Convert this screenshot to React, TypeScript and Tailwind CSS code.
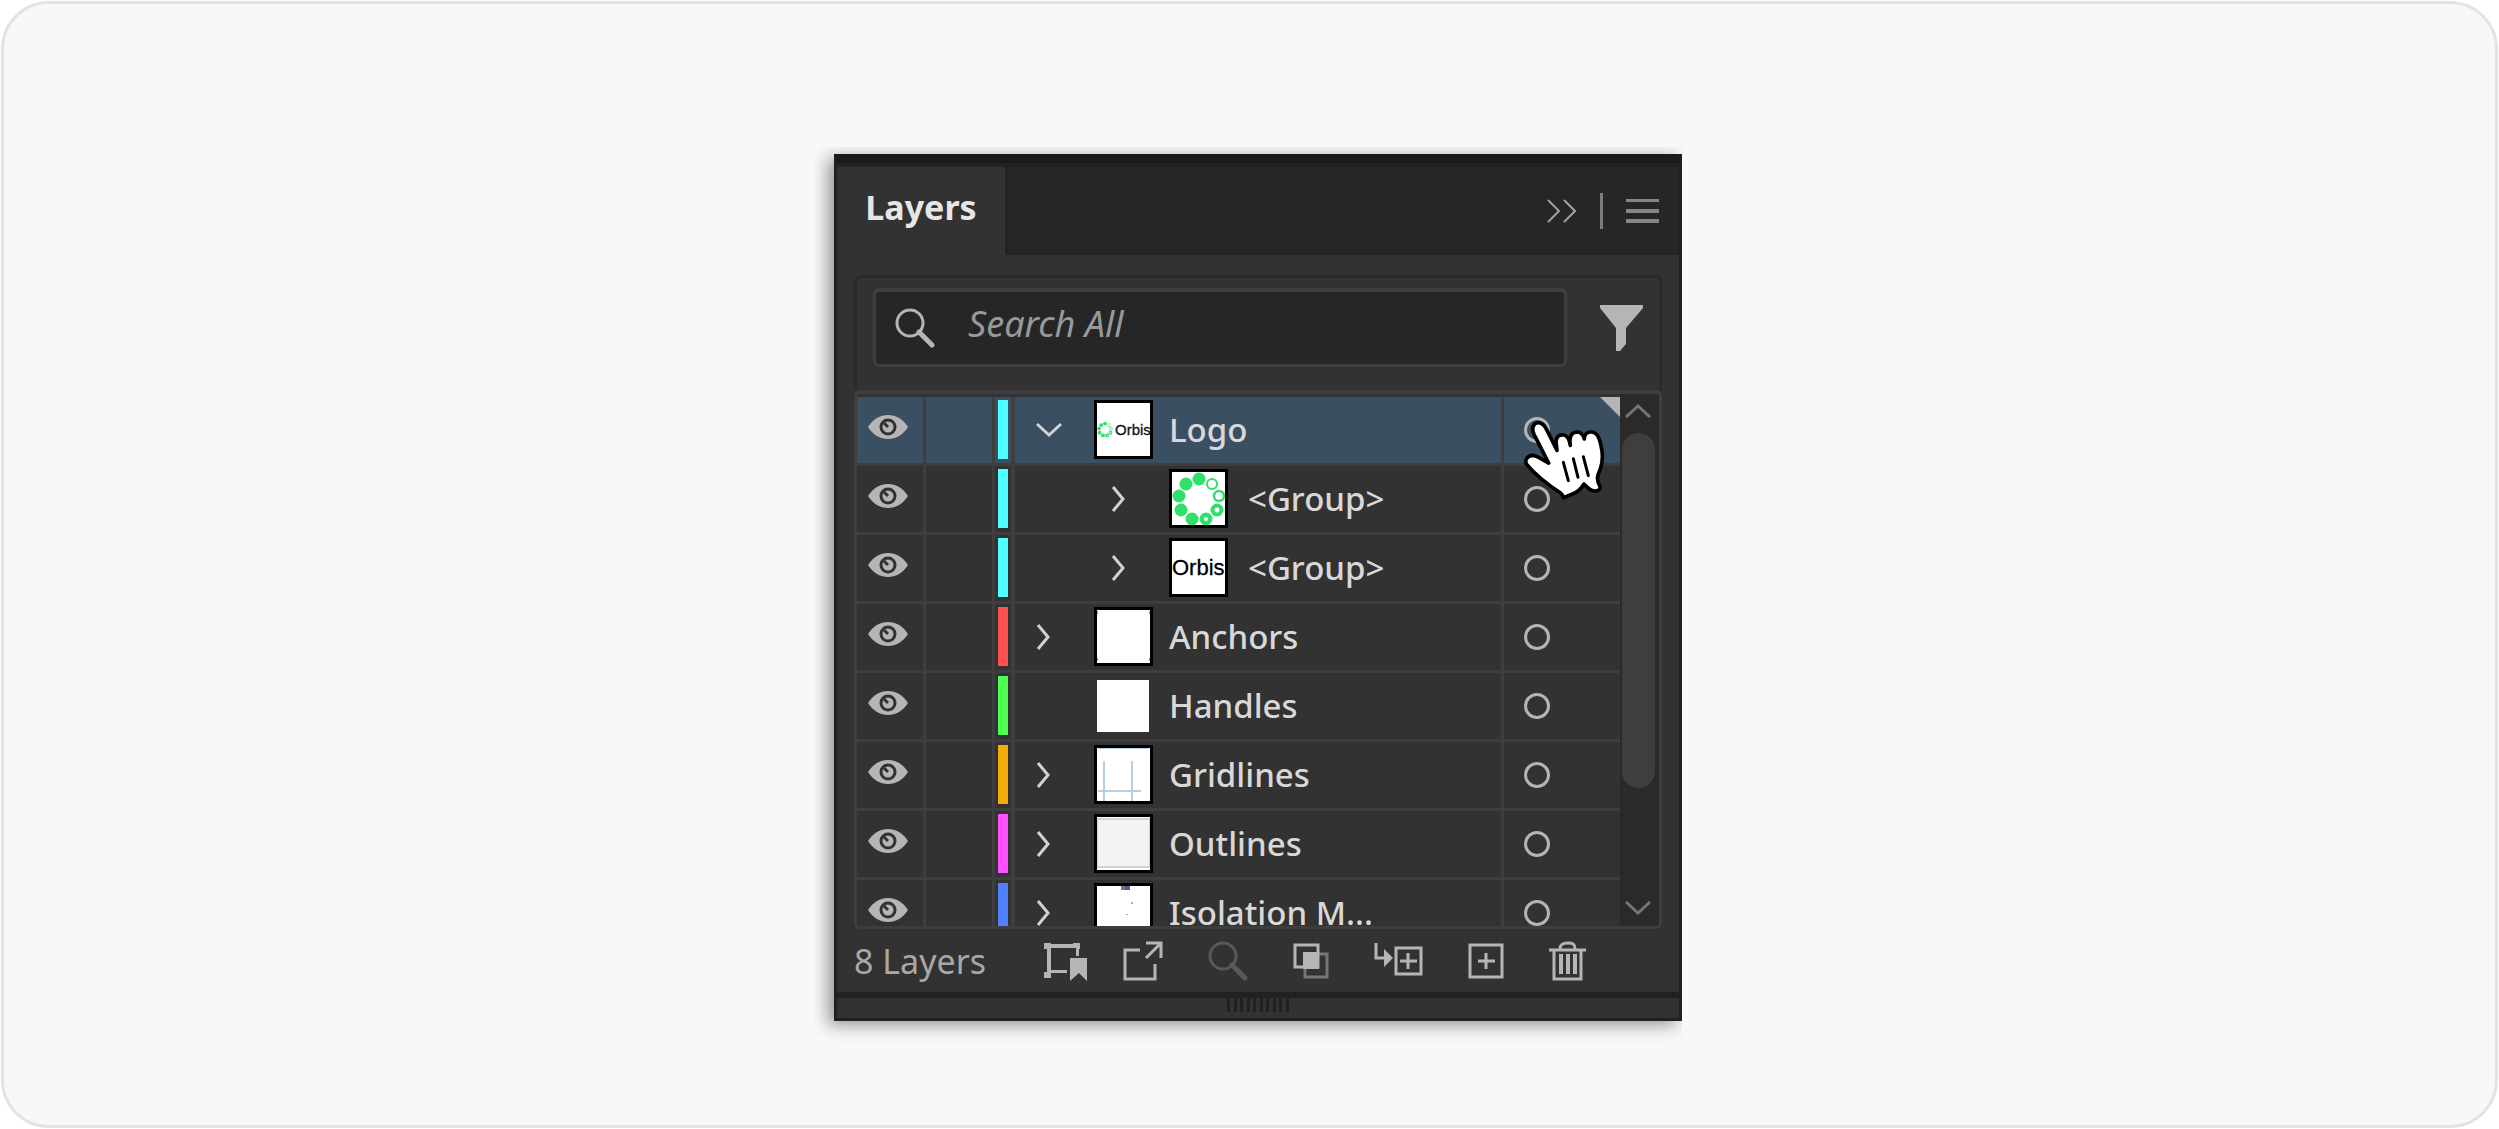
import { useState } from 'react'

type Layer = {
  id: string
  name: string
  color: string
  thumb: string
  child?: boolean
  arrow?: 'open' | 'closed'
}

const layers: Layer[] = [
  { id: 'logo', name: 'Logo', color: 'bg-[#4fffff]', thumb: 'logo', arrow: 'open' },
  { id: 'group-mark', name: '<Group>', color: 'bg-[#4fffff]', thumb: 'mark', child: true, arrow: 'closed' },
  { id: 'group-word', name: '<Group>', color: 'bg-[#4fffff]', thumb: 'word', child: true, arrow: 'closed' },
  { id: 'anchors', name: 'Anchors', color: 'bg-[#ff4f4f]', thumb: 'anchors', arrow: 'closed' },
  { id: 'handles', name: 'Handles', color: 'bg-[#4fff4f]', thumb: 'handles' },
  { id: 'gridlines', name: 'Gridlines', color: 'bg-[#f3ae05]', thumb: 'gridlines', arrow: 'closed' },
  { id: 'outlines', name: 'Outlines', color: 'bg-[#ff4fff]', thumb: 'outlines', arrow: 'closed' },
  { id: 'isolation', name: 'Isolation M...', color: 'bg-[#4f80ff]', thumb: 'isolation', arrow: 'closed' },
]

function EyeIcon() {
  return (
    <svg width="40" height="24" viewBox="0 0 40 24">
      <path d="M0 12C5 4 12 0 20 0s15 4 20 12c-5 8-12 12-20 12S5 20 0 12z" fill="#b5b5b5" />
      <circle cx="20" cy="12" r="7" fill="none" stroke="#323232" strokeWidth="3" />
      <path d="M20 12l-4-4" stroke="#323232" strokeWidth="3" />
    </svg>
  )
}

function Chevron({ open }: { open: boolean }) {
  return open ? (
    <svg width="26" height="15" viewBox="0 0 26 15" fill="none" stroke="#d2d2d2" strokeWidth="3">
      <path d="M1 2l12 11L25 2" />
    </svg>
  ) : (
    <svg width="14" height="26" viewBox="0 0 14 26" fill="none" stroke="#d2d2d2" strokeWidth="3">
      <path d="M2 1l10 12L2 25" />
    </svg>
  )
}

function RingMark() {
  return (
    <g fill="#2fe06a">
      <circle cx="27" cy="7" r="6.5" />
      <circle cx="14" cy="12" r="6.5" />
      <circle cx="7" cy="24" r="6.5" />
      <circle cx="9" cy="38" r="6.5" />
      <circle cx="20" cy="47" r="6.5" />
      <circle cx="34" cy="47" r="6.5" />
      <circle cx="45" cy="38" r="6.5" />
      <circle cx="47" cy="24" r="5" fill="none" stroke="#2fe06a" strokeWidth="2.5" />
      <circle cx="40" cy="12" r="5" fill="none" stroke="#2fe06a" strokeWidth="2" />
      <circle cx="34" cy="47" r="2" fill="#fff" />
      <circle cx="45" cy="38" r="2.5" fill="#fff" />
    </g>
  )
}

function Thumb({ kind }: { kind: string }) {
  return (
    <svg
      width="59"
      height="59"
      viewBox="-3 -3 59 59"
      className="shrink-0"
      fontFamily="'Liberation Sans', Arial, sans-serif"
    >
      {kind !== 'handles' && <rect x="-3" y="-3" width="59" height="59" fill="#000" />}
      <svg width="53" height="53" viewBox="0 0 53 53">
        <rect y={kind === 'handles' ? 1 : 0} width="52" height="52" fill="#fff" />
        {kind !== 'handles' && <rect width="53" height="53" fill="#fff" />}
        {kind === 'logo' && (
          <>
            <svg y="18" width="16" height="17" viewBox="0 0 54 54">
              <RingMark />
            </svg>
            <text x="18" y="32" fontSize="15" fill="#111" stroke="#111" strokeWidth="0.3">Orbis</text>
          </>
        )}
        {kind === 'mark' && <RingMark />}
        {kind === 'word' && (
          <text x="0" y="34" fontSize="22" fill="#000" stroke="#000" strokeWidth="0.3">Orbis</text>
        )}
        {kind === 'anchors' && (
          <path d="M0 1h1v3H0zM52 1h1v3h-1zM0 48h1v3H0zM52 48h1v3h-1z" fill="#999" />
        )}
        {kind === 'gridlines' && (
          <path d="M1 0h50M7 13v40M35 13v40M1 43h43" stroke="#b9cde4" strokeWidth="2" />
        )}
        {kind === 'outlines' && (
          <rect x="0" y="2" width="53" height="48" fill="#f3f3f3" stroke="#d2d2d2" strokeWidth="2" />
        )}
        {kind === 'isolation' && (
          <>
            <path d="M24 0h4v4h-4z" fill="#777" />
            <path d="M28 0h5v4h-5z" fill="#46648c" />
            <path d="M34 16h2v2h-2zM29 28h2v1h-2z" fill="#aaa" />
          </>
        )}
      </svg>
    </svg>
  )
}

function SearchIcon({ color }: { color: string }) {
  return (
    <svg width="40" height="40" viewBox="0 0 40 40" fill="none" stroke={color} className="shrink-0">
      <circle cx="15" cy="15" r="13" strokeWidth="3" />
      <path d="M24 24l13 13" strokeWidth="5" strokeLinecap="round" />
    </svg>
  )
}

function PointerHand() {
  return (
    <svg
      className="pointer-events-none absolute left-[18px] top-[22px] z-10"
      width="84"
      height="82"
      viewBox="726 118 252 246"
      stroke="#000"
      strokeLinecap="round"
      strokeLinejoin="round"
    >
      <path
        d="M806 250L762 164C752 142 764 128 776 129C788 130 795 139 800 150L831 212L828 186C829 168 842 164 852 166C862 168 868 180 871 197C867 172 874 158 890 157C903 157 910 165 913 178C912 162 924 156 936 157C956 160 961 185 966 214C969 240 966 256 960 270C953 286 947 298 960 320C962 328 955 335 943 334C928 332 921 321 912 313C902 330 892 338 876 344L850 354C848 348 848 344 842 340C808 318 770 290 740 254C733 243 741 228 757 227C772 227 786 240 806 250Z"
        fill="#fff"
        strokeWidth="11"
      />
      <path d="M850 248L865 303M880 237L894 293M910 231L925 288" fill="none" strokeWidth="9" />
    </svg>
  )
}

function LayerRow({
  layer,
  selected,
  onSelect,
}: {
  layer: Layer
  selected: boolean
  onSelect: () => void
}) {
  return (
    <li
      className={`relative flex h-[69px] shrink-0 border-b-[3px] border-[#3e3e3e] ${
        selected ? 'bg-[#3b4f63]' : 'bg-[#323232]'
      }`}
    >
      <button
        type="button"
        aria-label={`Toggle visibility of ${layer.name}`}
        className="flex w-[69px] items-center justify-center border-r-[3px] border-[#3e3e3e] pb-[6px] pr-1"
      >
        <EyeIcon />
      </button>
      <button
        type="button"
        aria-label={`Toggle lock of ${layer.name}`}
        className="w-[69px] border-r-[3px] border-[#3e3e3e]"
      />
      <div className="w-5 border-r-4 border-[#3e3e3e] px-[3px] py-[3px]">
        <div className={`h-[59px] w-[10px] ${layer.color}`} />
      </div>

      <div
        className={`flex min-w-0 flex-1 items-start border-r-[3px] border-[#3e3e3e] pt-[3px] ${
          layer.child ? 'gap-5 pl-[75px]' : 'gap-4'
        }`}
      >
        <div className="flex shrink-0">
          <div className="h-[59px] w-[79px]">
            {layer.arrow && (
              <button
                type="button"
                aria-label={`Expand ${layer.name}`}
                className="flex h-full w-full items-center pl-[21px]"
              >
                <Chevron open={layer.arrow === 'open'} />
              </button>
            )}
          </div>
          <Thumb kind={layer.thumb} />
        </div>
        <span className="truncate text-[33px] font-medium leading-[60px] text-[#d8d8d8]">
          {layer.name}
        </span>
      </div>

      <div className="relative w-[116px]">
        <button
          type="button"
          aria-label={`Target ${layer.name}`}
          onClick={onSelect}
          className="ml-5 mt-5 block size-[26px] rounded-full border-[3px] border-[#b5b5b5]"
        />
        {selected && (
          <>
            <svg className="absolute right-0 top-0" width="20" height="20" viewBox="0 0 20 20">
              <path d="M0 0h20v20z" fill="#b5b5b5" />
            </svg>
            <PointerHand />
          </>
        )}
      </div>
    </li>
  )
}

export default function App() {
  const [selected, setSelected] = useState('logo')
  const [query, setQuery] = useState('')

  return (
    <div className="flex min-h-screen bg-white p-px font-['Noto_Sans',sans-serif]">
      <main className="flex flex-1 items-start justify-center rounded-[48px] border-[3px] border-[#e2e4e4] bg-[#f6f8fa] pb-24 pl-[17px] pt-[150px]">
        <section className="w-[848px] max-w-full border-[3px] border-t-[9px] border-[#212121] border-t-[#1a1a1a] bg-[#323232] shadow-[-6px_4px_16px_rgba(0,0,0,0.4)] [clip-path:inset(-7px_0_-24px_-20px)]">
          <header className="flex h-[92px] border-t-4 border-[#222222] bg-[#262626]">
            <h2 className="flex">
              <button
                type="button"
                className="w-[171px] border-r-[3px] border-[#222222] bg-[#323232] pb-2 text-[34px] font-bold text-[#e6e6e6]"
              >
                Layers
              </button>
            </h2>
            <div className="flex flex-1 items-center justify-end border-b-[3px] border-[#222222] pr-5 pt-[3px]">
              <button type="button" aria-label="Collapse panel">
                <svg width="29" height="24" viewBox="0 0 29 24" fill="none" stroke="#a0a0a0" strokeWidth="2">
                  <path d="M1 1l11 11L1 23M17 1l11 11-11 11" />
                </svg>
              </button>
              <div className="ml-6 h-9 w-[3px] bg-[#7d7d7d]" />
              <button type="button" aria-label="Panel menu" className="ml-[23px]">
                <svg width="33" height="24" viewBox="0 0 33 24" fill="#858585">
                  <path d="M0 0h33v3H0zM0 10h33v4H0zM0 20h33v4H0z" />
                </svg>
              </button>
            </div>
          </header>

          <div className="px-[17px] pt-5">
            <div className="flex items-center gap-[33px] rounded-t-md border-x-[3px] border-t-[3px] border-[#2a2a2a] px-4 pb-[23px] pt-[10px]">
              <label className="flex h-[79px] min-w-0 flex-1 items-center gap-[33px] rounded-md border-[3px] border-t-4 border-[#3e3e3e] bg-[#262626] pl-[19px]">
                <SearchIcon color="#b5b5b5" />
                <input
                  type="text"
                  aria-label="Search layers"
                  value={query}
                  onChange={(e) => setQuery(e.target.value)}
                  placeholder="Search All"
                  className="min-w-0 flex-1 bg-transparent pb-2 text-[36px] italic text-[#d8d8d8] outline-none placeholder:text-[#999999]"
                />
              </label>
              <button type="button" aria-label="Filter layers">
                <svg width="43" height="46" viewBox="0 0 43 46" fill="#b5b5b5">
                  <path d="M0 0h43v3L26 23v16l-6 7h-4V23L0 3z" />
                </svg>
              </button>
            </div>

            <div className="flex h-[539px] overflow-hidden rounded-md border-[3px] border-t-4 border-[#3e3e3e]">
              <ul className="flex min-w-0 flex-1 flex-col pt-[3px]">
                {layers.map((layer) => (
                  <LayerRow
                    key={layer.id}
                    layer={layer}
                    selected={layer.id === selected}
                    onSelect={() => setSelected(layer.id)}
                  />
                ))}
              </ul>
              <div className="flex w-[39px] flex-col items-center bg-[#2a2a2a] pb-[11px] pr-[3px] pt-[10px]">
                <button type="button" aria-label="Scroll up" className="flex">
                  <svg width="26" height="14" viewBox="0 0 26 14" fill="none" stroke="#757575" strokeWidth="3">
                    <path d="M1 13L13 2l12 11" />
                  </svg>
                </button>
                <div className="mt-[15px] h-[355px] w-[33px] rounded-full bg-[#3e3e3e]" />
                <button type="button" aria-label="Scroll down" className="mt-auto flex">
                  <svg width="26" height="14" viewBox="0 0 26 14" fill="none" stroke="#757575" strokeWidth="3">
                    <path d="M1 1l12 11L25 1" />
                  </svg>
                </button>
              </div>
            </div>
          </div>

          <footer className="flex h-[63px] items-center pl-[17px]">
            <span className="w-[190px] text-[34px] leading-[60px] text-[#a8a8a8]">8 Layers</span>
            <div className="flex items-center gap-[45px]">
              <div className="flex items-center gap-9">
                <button type="button" aria-label="Locate artboard">
                  <svg width="43" height="40" viewBox="0 0 43 40" fill="#b5b5b5">
                    <path d="M0 2h7v1h22V2h7v6h-1v7h-3V7H7v22h16v3H7v5H0v-6h3V8H0z" />
                    <path d="M26 17h17v23l-8-8-9 8z" />
                  </svg>
                </button>
                <button type="button" aria-label="Collect for export">
                  <svg width="40" height="40" viewBox="0 0 40 40" fill="none" stroke="#b5b5b5" strokeWidth="3">
                    <path d="M17 9H2v29h30V23" />
                    <path d="M23 2h15v15M38 2L23 17" />
                  </svg>
                </button>
              </div>
              <button type="button" aria-label="Locate object" disabled>
                <SearchIcon color="#595959" />
              </button>
              <button type="button" aria-label="Make clipping mask">
                <svg width="36" height="36" viewBox="0 0 36 36" fill="none" strokeWidth="3">
                  <path d="M26 11h8v23H12v-8" stroke="#757575" />
                  <path d="M2 2h23v22H2z" stroke="#b5b5b5" />
                  <path d="M10 9h16v17H10z" fill="#b5b5b5" />
                </svg>
              </button>
              <button type="button" aria-label="Create new sublayer">
                <svg width="49" height="36" viewBox="0 0 49 36" fill="none" stroke="#b5b5b5" strokeWidth="3">
                  <path d="M2 0v15h9" />
                  <path d="M10 6v18l9-9z" fill="#b5b5b5" stroke="none" />
                  <path d="M22 5h25v26H22zM26 18h17M34 10v16" />
                </svg>
              </button>
              <button type="button" aria-label="Create new layer">
                <svg width="36" height="36" viewBox="0 0 36 36" fill="none" stroke="#b5b5b5" strokeWidth="3">
                  <path d="M2 2h32v32H2zM10 18h17M18 10v16" />
                </svg>
              </button>
              <button type="button" aria-label="Delete layer">
                <svg width="37" height="40" viewBox="0 0 37 40" fill="none" stroke="#b5b5b5" strokeWidth="3">
                  <path d="M0 9h37M5 9v29h27V9M11 8c0-5 3-6 8-6s7 1 7 6" />
                  <path d="M12 13v20M19 13v20M26 13v20" strokeWidth="4" />
                </svg>
              </button>
            </div>
          </footer>

          <div className="flex h-[26px] items-start justify-center border-t-[6px] border-[#212121]">
            <div className="flex w-[62px] justify-between">
              {Array.from({ length: 10 }, (_, i) => (
                <span key={i} className="h-[14px] w-[3px] bg-[#212121]" />
              ))}
            </div>
          </div>
        </section>
      </main>
    </div>
  )
}
